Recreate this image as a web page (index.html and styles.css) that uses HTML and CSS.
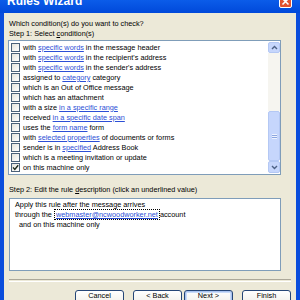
FILE: index.html
```html
<!DOCTYPE html>
<html lang="en">
<head>
    <meta charset="UTF-8">
    <title>Rules Wizard</title>
    <link rel="stylesheet" href="styles.css">
</head>
<body>
    <div class="window">
        <div class="titlebar">
            <span class="title">Rules Wizard</span>
            <span class="close">
                <svg width="9" height="9" viewBox="0 0 9 9"><path d="M1.5 1.5 L7.5 7.5 M7.5 1.5 L1.5 7.5" stroke="#fff" stroke-width="1.6"/></svg>
            </span>
        </div>
        <div class="frame">
            <div class="label">Which condition(s) do you want to check?</div>
            <div class="label">Step 1: Select <u>c</u>ondition(s)</div>

            <div class="list">
                <div class="items">
                    <div class="row"><span class="box"></span><span>with <a>specific words</a> in the message header</span></div>
                    <div class="row"><span class="box"></span><span>with <a>specific words</a> in the recipient's address</span></div>
                    <div class="row"><span class="box"></span><span>with <a>specific words</a> in the sender's address</span></div>
                    <div class="row"><span class="box"></span><span>assigned to <a>category</a> category</span></div>
                    <div class="row"><span class="box"></span><span>which is an Out of Office message</span></div>
                    <div class="row"><span class="box"></span><span>which has an attachment</span></div>
                    <div class="row"><span class="box"></span><span>with a size <a>in a specific range</a></span></div>
                    <div class="row"><span class="box"></span><span>received <a>in a specific date span</a></span></div>
                    <div class="row"><span class="box"></span><span>uses the <a>form name</a> form</span></div>
                    <div class="row"><span class="box"></span><span>with <a>selected properties</a> of documents or forms</span></div>
                    <div class="row"><span class="box"></span><span>sender is in <a>specified</a> Address Book</span></div>
                    <div class="row"><span class="box"></span><span>which is a meeting invitation or update</span></div>
                    <div class="row"><span class="box"><svg width="7" height="7" viewBox="0 0 7 7"><path d="M1 3.4 L2.8 5.4 L6.2 1.2" fill="none" stroke="#1e2a1e" stroke-width="1.4"/></svg></span><span>on this machine only</span></div>
                </div>
                <div class="scrollbar">
                    <div class="sb-btn"><svg width="7" height="5" viewBox="0 0 7 5"><path d="M1 4 L3.5 1.5 L6 4" fill="none" stroke="#4d6185" stroke-width="1.4"/></svg></div>
                    <div class="sb-track"></div>
                    <div class="sb-thumb"><span class="grip"></span></div>
                    <div class="sb-btn down"><svg width="7" height="5" viewBox="0 0 7 5"><path d="M1 1 L3.5 3.5 L6 1" fill="none" stroke="#4d6185" stroke-width="1.4"/></svg></div>
                </div>
            </div>

            <div class="label step2">Step 2: Edit the rule <u>d</u>escription (click an underlined value)</div>

            <div class="desc">
                <div>Apply this rule after the message arrives</div>
                <div>through the <a class="focus">webmaster@ncwoodworker.net</a>account</div>
                <div class="indent">and on this machine only</div>
            </div>

            <div class="separator"></div>

            <div class="buttons">
                <button class="gap">Cancel</button>
                <button class="tight">&lt; Back</button>
                <button class="default gap">Next &gt;</button>
                <button>Finish</button>
            </div>
        </div>
    </div>
</body>
</html>
```

FILE: styles.css
```css
body {
    margin: 0;
    width: 300px;
    height: 300px;
    overflow: hidden;
    font-family: "Liberation Sans", Arial, sans-serif;
    font-size: 7.3px;
    color: #000;
}
.window {
    width: 300px;
    height: 300px;
    overflow: hidden;
}
.titlebar {
    display: flex;
    align-items: flex-start;
    height: 13px;
    overflow: hidden;
    padding-left: 7px;
    background: linear-gradient(#0b5ce9, #0049da);
}
.title {
    margin-top: -5px;
    font-size: 12px;
    line-height: 12px;
    font-weight: bold;
    color: #fff;
}
.close {
    display: flex;
    align-items: center;
    justify-content: center;
    width: 13px;
    height: 14px;
    margin: -6px 8px 0 auto;
    box-sizing: border-box;
    border: 1px solid #fff;
    border-radius: 2px;
    background: #e2532f;
}
.frame {
    height: 287px;
    overflow: hidden;
    padding: 6px 0 0 4px;
    border-left: 4px solid #0a4ddc;
    border-right: 4px solid #0a4ddc;
    background: #ece9d8;
}
.label {
    padding-left: 1px;
    line-height: 10px;
    white-space: nowrap;
}
.list {
    display: flex;
    width: 273px;
    height: 135px;
    margin-top: 1px;
    box-sizing: border-box;
    border: 1px solid #7f9db9;
    background: #fff;
}
.items {
    flex: 1;
    padding: 1px 0 0 2px;
}
.row {
    display: flex;
    align-items: center;
    height: 10px;
    white-space: nowrap;
}
.box {
    display: flex;
    align-items: center;
    justify-content: center;
    width: 9px;
    height: 9px;
    margin-right: 3px;
    box-sizing: border-box;
    border: 1px solid #4a6079;
    background: linear-gradient(135deg, #e4e3dc, #fff);
}
a {
    color: #2c4fd6;
    text-decoration: underline;
}
.scrollbar {
    display: flex;
    flex-direction: column;
    width: 12px;
    padding: 1px 0;
}
.sb-btn {
    display: flex;
    align-items: center;
    justify-content: center;
    height: 11px;
    box-sizing: border-box;
    border: 1px solid #b4c8f4;
    border-radius: 2px;
    background: #c6d6fc;
}
.sb-btn.down {
    height: 12px;
}
.sb-track {
    flex: 1;
    background: #f6f5f0;
}
.sb-thumb {
    display: flex;
    align-items: center;
    justify-content: center;
    height: 50px;
    box-sizing: border-box;
    border: 1px solid #b4c8f4;
    border-radius: 2px;
    background: #c6d6fc;
}
.grip {
    width: 5px;
    height: 5px;
    background: repeating-linear-gradient(#eef3fe 0 1px, #8ca6e0 1px 2px);
}
.step2 {
    margin-top: 10px;
}
.desc {
    width: 272px;
    height: 73px;
    margin: 3px 0 0 1px;
    padding: 1px 0 0 5px;
    box-sizing: border-box;
    border: 1px solid #7f9db9;
    background: #fff;
    line-height: 10px;
    white-space: nowrap;
}
.desc .focus {
    border: 1px dotted #000;
    padding: 0 1px;
}
.indent {
    padding-left: 4px;
}
.separator {
    width: 282px;
    height: 1px;
    margin: 8px 0 0 1px;
    border-top: 1px solid #aca899;
    border-bottom: 1px solid #fff;
}
.buttons {
    display: flex;
    justify-content: flex-end;
    margin: 8px 5px 0 0;
}
button {
    width: 49px;
    height: 18px;
    padding: 0;
    align-self: flex-start;
    border: 1px solid #254677;
    border-radius: 3px;
    background: linear-gradient(#fff, #f0efe9 80%, #d8d5c8);
    font: inherit;
    line-height: 10px;
    color: #000;
    display: flex;
    justify-content: center;
    align-items: flex-start;
}
button.gap {
    margin-right: 9px;
}
button.tight {
    margin-right: 2px;
}
button.default {
    box-shadow: inset 0 0 0 1px #a9c3f0, inset 0 0 0 2px #c9dbf8;
}
```
